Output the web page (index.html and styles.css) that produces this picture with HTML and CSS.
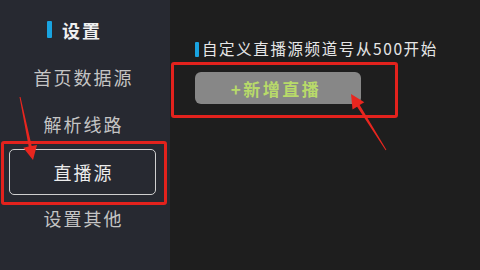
FILE: index.html
```html
<!DOCTYPE html>
<html lang="zh">
<head>
<meta charset="utf-8">
<link rel="stylesheet" href="styles.css">
</head>
<body>
<div class="app">
  <aside class="sidebar">
    <div class="side-head"><span class="bar"></span><span class="head-text">设置</span></div>
    <div class="side-item">首页数据源</div>
    <div class="side-item">解析线路</div>
    <div class="side-item active">直播源</div>
    <div class="side-item">设置其他</div>
  </aside>
  <main class="content">
    <div class="label"><span class="bar small"></span><span class="label-text">自定义直播源频道号从500开始</span></div>
    <div class="add-btn">+新增直播</div>
  </main>
</div>
<div class="mark mark-side"></div>
<div class="mark mark-btn"></div>
<svg class="arrows" width="480" height="270" viewBox="0 0 480 270">
  <polygon points="20.5,96.9 31.7,146.0 37.0,144.9 33,160 23.3,147.7 28.7,146.6 19.5,97.1" fill="#e8261f"/>
  <polygon points="386.4,149.7 359.7,105.1 364.3,102.2 351,94 352.5,109.6 357.1,106.7 385.6,150.3" fill="#e8261f"/>
</svg>
</body>
</html>
```
FILE: styles.css
```css
* { box-sizing: border-box; }
html, body { margin: 0; padding: 0; }
body {
  width: 480px;
  height: 270px;
  overflow: hidden;
  background: #1e1e1e;
  font-family: "Noto Sans CJK SC", "Noto Sans", sans-serif;
  position: relative;
}
.app {
  display: flex;
  width: 480px;
  height: 270px;
}
.sidebar {
  width: 170px;
  flex: none;
  background: #272931;
  padding-top: 6px;
  display: flex;
  flex-direction: column;
}
.side-head {
  height: 47px;
  display: flex;
  align-items: center;
  padding-left: 47px;
}
.bar {
  display: inline-block;
  width: 5px;
  height: 17px;
  background: #19a3e0;
  border-radius: 1px;
}
.head-text {
  margin-left: 10px;
  color: #f0f0f0;
  font-size: 18px;
  font-weight: bold;
  letter-spacing: 2px;
  line-height: 1;
}
.side-item {
  height: 47px;
  width: 147px;
  margin-left: 9px;
  display: flex;
  align-items: center;
  justify-content: center;
  color: #c4c4c4;
  font-size: 18px;
  letter-spacing: 2px;
  padding-left: 2px;
  line-height: 1;
}
.side-item.active {
  color: #ececec;
  border: 1.5px solid #cfcfcf;
  border-radius: 5px;
  height: 46px;
  margin-top: 2px;
  margin-bottom: -1px;
}
.content {
  flex: 1;
  padding: 41px 0 0 25px;
  display: flex;
  flex-direction: column;
  align-items: flex-start;
}
.label {
  display: flex;
  align-items: center;
  height: 16px;
}
.bar.small {
  width: 4px;
  height: 15px;
}
.label-text {
  margin-left: 3px;
  color: #e6e6e6;
  font-size: 15.5px;
  letter-spacing: 1.6px;
  line-height: 1;
}
.add-btn {
  margin-top: 15px;
  width: 166px;
  height: 32px;
  background: #878787;
  border-radius: 6px;
  display: flex;
  align-items: center;
  justify-content: center;
  color: #b8da6a;
  font-size: 17px;
  font-weight: bold;
  letter-spacing: 2.5px;
  padding-right: 4px;
  line-height: 1;
}
.mark {
  position: absolute;
  border: 3px solid #e3221d;
  border-radius: 3px;
}
.mark-side {
  left: 1px;
  top: 141px;
  width: 166px;
  height: 64px;
}
.mark-btn {
  left: 171px;
  top: 62px;
  width: 227px;
  height: 56px;
}
.arrows {
  position: absolute;
  left: 0;
  top: 0;
}
```
